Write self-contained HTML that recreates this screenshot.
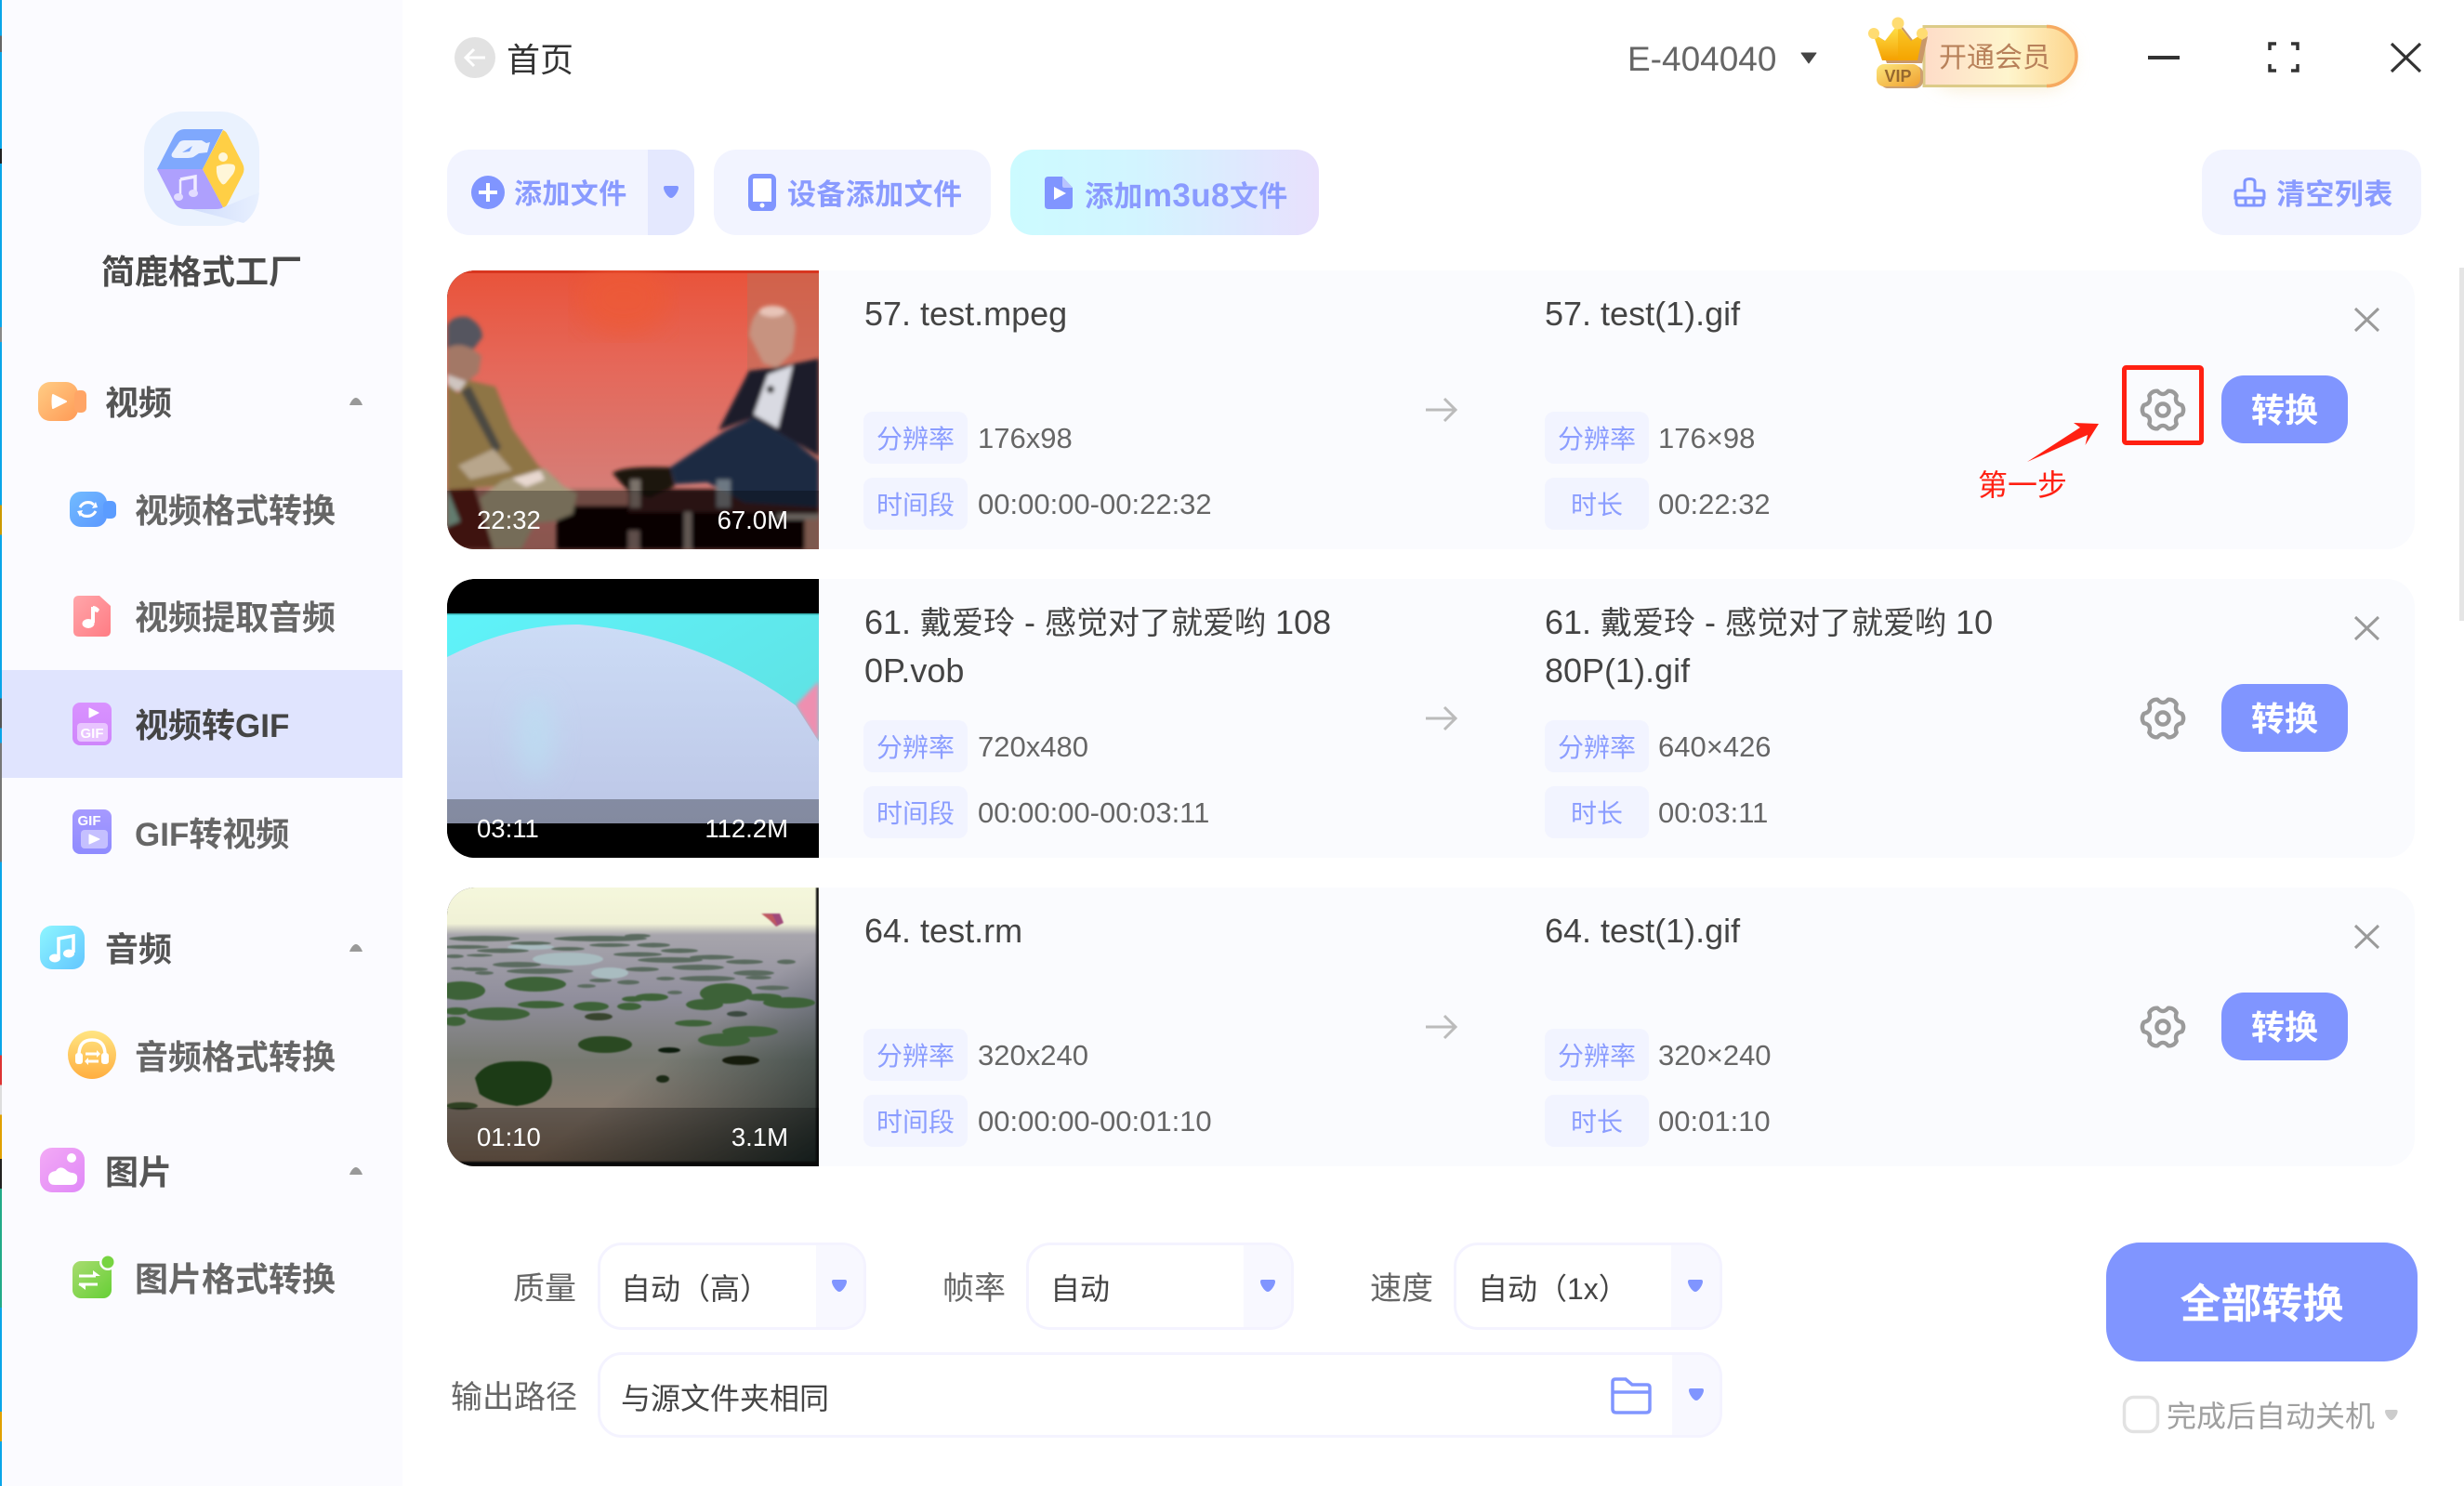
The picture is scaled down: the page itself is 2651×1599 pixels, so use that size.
<!DOCTYPE html>
<html lang="zh"><head><meta charset="utf-8"><title>简鹿格式工厂</title>
<style>
html,body{margin:0;padding:0;background:#fff}
body{position:relative;width:2651px;height:1599px;overflow:hidden;font-family:"Liberation Sans","Noto Sans CJK SC",sans-serif;color:#444}
.t{position:absolute;white-space:nowrap;line-height:1}
.b{font-weight:700}
.abs{position:absolute;left:0;top:0}
.side{position:absolute;left:0;top:0;width:433px;height:1599px;background:#fbfbff}
.strip{position:absolute;left:0;top:0;width:2px;height:1599px;background:linear-gradient(180deg,#0aa5e8 0 2.4%,#666 2.4% 3.5%,#0aa5e8 3.5% 10%,#222 10% 11%,#0aa5e8 11% 22%,#888 22% 23%,#0aa5e8 23% 34%,#c90 34% 36%,#0aa5e8 36% 47%,#555 47% 49%,#0aa5e8 49% 50%,#777 50% 58%,#0aa5e8 58% 71%,#d33 71% 73%,#ddd 73% 75%,#e0a000 75% 78%,#222 78% 80%,#2a8 80% 88%,#0aa5e8 88% 95%,#e0a000 95% 97%,#0aa5e8 97%)}
.sel{position:absolute;left:2px;top:721px;width:431px;height:116px;background:#e0e4fe}
.btn{position:absolute;top:161px;height:92px;border-radius:24px;background:#f2f4ff}
.sb{color:#555;font-size:36px}.si{color:#666;font-size:36px}
.pb{color:#8a9bff;font-size:31px;font-weight:700;letter-spacing:.4px}
.row{position:absolute;left:481px;width:2117px;height:300px;background:#fafbfe;border-radius:30px}
.thumb{position:absolute;left:0;top:0;width:400px;height:300px;border-radius:30px 0 0 30px;overflow:hidden;background:#000}
.thumb svg{display:block}
.ov{position:absolute;left:0;top:237px;width:400px;height:63px;background:rgba(0,0,0,.3)}
.tm{color:#fff;font-size:27.5px;top:255px}
.nm{font-size:36px;color:#444;left:449px}
.nm span{font-size:34px}
.tag{position:absolute;width:112px;height:56px;border-radius:10px;background:#f2f4ff;color:#8b9dff;font-size:28px;line-height:59px;text-align:center}
.val{color:#666;font-size:31px}
.go{position:absolute;left:1909px;top:113px;width:136px;height:73px;border-radius:24px;background:#8095ff;color:#fff;font-weight:700;font-size:36px;line-height:75px;text-align:center}
.sel2{position:absolute;box-sizing:border-box;background:#fff;border:3px solid #f4f3ff;border-radius:26px;overflow:hidden}
.sel2 i{position:absolute;top:0;bottom:0;right:0;background:#f8f8ff;display:block}
.lb{color:#666;font-size:34px}
.v2{color:#444;font-size:32px}
.all{position:absolute;left:2266px;top:1337px;width:335px;height:128px;border-radius:36px;background:#8095ff;color:#fff;font-weight:700;font-size:44px;line-height:134px;text-align:center}
.sc{position:absolute;left:2646px;top:288px;width:5px;height:380px;background:#e5e5e5}
</style></head><body>

<div class="side"></div><div class="strip"></div><div class="sel"></div>

<div class="btn" style="left:481px;width:266px;overflow:hidden"><div style="position:absolute;left:216px;top:0;width:50px;height:92px;background:#e4e8fe"></div></div>
<div class="btn" style="left:768px;width:298px"></div>
<div class="btn" style="left:1087px;width:332px;background:linear-gradient(90deg,#ccfbff 0%,#d2f5ff 40%,#e8e0fd 100%)"></div>
<div class="btn" style="left:2369px;width:236px"></div>

<svg class="abs" width="2651" height="1599" viewBox="0 0 2651 1599" style="z-index:1">
<defs>
<linearGradient id="go" x1="0" y1="0" x2="1" y2="1"><stop offset="0" stop-color="#ffcd85"/><stop offset="1" stop-color="#ff9a56"/></linearGradient>
<linearGradient id="gb" x1="0" y1="0" x2="1" y2="1"><stop offset="0" stop-color="#72bcff"/><stop offset="1" stop-color="#5b97ff"/></linearGradient>
<linearGradient id="gr" x1="0" y1="0" x2="1" y2="1"><stop offset="0" stop-color="#ffa6aa"/><stop offset="1" stop-color="#ff7c84"/></linearGradient>
<linearGradient id="gp" x1="0" y1="0" x2="0" y2="1"><stop offset="0" stop-color="#d992ff"/><stop offset="1" stop-color="#cf86fb"/></linearGradient>
<linearGradient id="gv" x1="0" y1="0" x2="0" y2="1"><stop offset="0" stop-color="#a69aff"/><stop offset="1" stop-color="#8f8bff"/></linearGradient>
<linearGradient id="gc" x1="0" y1="0" x2="1" y2="1"><stop offset="0" stop-color="#8ef6ff"/><stop offset="1" stop-color="#62c6ff"/></linearGradient>
<linearGradient id="gy" x1="0" y1="0" x2="0" y2="1"><stop offset="0" stop-color="#ffe582"/><stop offset="1" stop-color="#ffae40"/></linearGradient>
<linearGradient id="gk" x1="0" y1="0" x2="1" y2="1"><stop offset="0" stop-color="#f3aaf5"/><stop offset="1" stop-color="#e088f8"/></linearGradient>
<linearGradient id="gg" x1="0" y1="0" x2="1" y2="1"><stop offset="0" stop-color="#a9dc70"/><stop offset="1" stop-color="#66cf35"/></linearGradient>
<linearGradient id="gs" x1="0" y1="0" x2="1" y2="0"><stop offset="0" stop-color="#cfdcfc"/><stop offset="1" stop-color="#e8f0fe"/></linearGradient>
<linearGradient id="gv1" x1="0" y1="0" x2="1" y2="0"><stop offset="0" stop-color="#fedcc8"/><stop offset=".55" stop-color="#fef5cd"/><stop offset="1" stop-color="#fdd58c"/></linearGradient>
<linearGradient id="gv2" x1="0" y1="0" x2="0" y2="1"><stop offset="0" stop-color="#ffe650"/><stop offset="1" stop-color="#f5a000"/></linearGradient>
<linearGradient id="gv3" x1="0" y1="0" x2="1" y2="1"><stop offset="0" stop-color="#fce67c"/><stop offset="1" stop-color="#f0a030"/></linearGradient>
<path id="dd" d="M2 0H14A2 2 0 0 1 16 2C16 6 11 13 8 13C5 13 0 6 0 2A2 2 0 0 1 2 0Z"/>
<path id="up" d="M0 8C1 5 4 0 7 0S13 5 14 8Z"/>
<g id="gear" fill="none" stroke="#9a9a9a" stroke-width="5" stroke-linejoin="round"><path d="M-6.600 -23.100Q0 -15.500 6.600 -23.100Q13.500 -23.400 16.700 -17.300Q13.400 -7.750 23.300 -5.800Q27 0 23.300 5.800Q13.400 7.750 16.700 17.300Q13.500 23.400 6.600 23.100Q0 15.500 -6.600 23.100Q-13.500 23.400 -16.700 17.300Q-13.400 7.750 -23.300 5.800Q-27 0 -23.300 -5.800Q-13.400 -7.750 -16.700 -17.300Q-13.500 -23.400 -6.600 -23.100Z"/><circle r="7.500"/></g>
<g id="rowicons"><path d="M1053 150H1085M1073 138L1085 150L1073 162" fill="none" stroke="#bbb" stroke-width="3"/><path d="M2053 41L2078 65M2078 41L2053 65" stroke="#9a9a9a" stroke-width="3"/><use href="#gear" transform="translate(1846 150) scale(.88)"/></g>
<filter id="sh" x="-20%" y="-20%" width="140%" height="160%"><feGaussianBlur stdDeviation="9"/></filter>
</defs>

<!-- logo -->
<rect x="155" y="120" width="124" height="123" rx="42" fill="#eaf2fe"/>
<path d="M240 223L279 207Q277 230 262 240L205 225Z" fill="url(#gs)"/>
<path d="M169 182L187 147Q191 139 199 139H240L218 182Z" fill="#7fa8fd"/>
<path d="M169 182H218L240 223Q238 225 232 225H199Q191 225 187 217Z" fill="#aea0fd"/>
<path d="M240 140Q243 141 245 145L261 176Q264 182 261 188L245 219Q243 223 240 223L218 182Z" fill="#ffcf45"/>
<path d="M185 165L193 153Q195 151 199 151H217L222 154L226 153L223 164L214 165L208 169Q205 170 200 170H190Q183 170 185 165Z" fill="#e9f0fe"/>
<path d="M196 164L207 157L204 163Z" fill="#7fa8fd"/>
<circle cx="240" cy="169" r="5" fill="#fff6d8"/>
<path d="M233 179Q243 175 251 177Q255 179 251 187L243 197Q240 200 238 197Q232 190 233 179Z" fill="#fff6d8"/>
<path d="M194 193L210 190V206" fill="none" stroke="#f0ecff" stroke-width="3.5"/>
<path d="M194 193V211" stroke="#f0ecff" stroke-width="2.5"/>
<ellipse cx="192" cy="212" rx="5" ry="4" fill="#e2dcff"/><ellipse cx="208" cy="208" rx="5" ry="4" fill="#e2dcff"/>

<!-- sidebar icons -->
<rect x="41" y="411" width="43" height="42" rx="13" fill="url(#go)"/><rect x="80" y="420" width="13" height="24" rx="5" fill="#ffa566"/>
<path d="M57 425L71 432L57 439Q56 432 57 425Z" fill="#fff" stroke="#fff" stroke-width="2" stroke-linejoin="round"/>
<path d="M376 436C377 433 380 428 383 428S389 433 390 436Z" fill="#999"/>

<rect x="75" y="529" width="40" height="38" rx="12" fill="url(#gb)"/><rect x="111" y="539" width="14" height="19" rx="5" fill="#5b9cff"/>
<path d="M86 546Q90 539 98 541L101 543M103 550Q99 557 90 555L87 553" fill="none" stroke="#fff" stroke-width="3"/>
<path d="M99 547L105 546L103 540Z M89 549L83 550L86 556Z" fill="#fff"/>

<path d="M85 641H107L119 652V679Q119 685 113 685H85Q79 685 79 679V647Q79 641 85 641Z" fill="url(#gr)"/>
<path d="M100 653V670" stroke="#fff" stroke-width="4"/><path d="M100 652Q104 652 107 656L105 659Q102 658 100 658Z" fill="#fff"/>
<ellipse cx="95" cy="671" rx="6.5" ry="5" fill="#fff"/>

<rect x="78" y="756" width="42" height="46" rx="8" fill="url(#gp)"/>
<path d="M96 762L106 767L96 772Z" fill="#fff" stroke="#fff" stroke-linejoin="round"/>
<rect x="83" y="778" width="33" height="20" rx="4" fill="#e8c4ff"/>
<text x="99" y="794" font-family="Liberation Sans" font-weight="700" font-size="15" fill="#fff" text-anchor="middle">GIF</text>

<rect x="78" y="871" width="42" height="48" rx="8" fill="url(#gv)"/>
<text x="96" y="888" font-family="Liberation Sans" font-weight="700" font-size="15" fill="#fff" text-anchor="middle">GIF</text>
<rect x="87" y="893" width="29" height="20" rx="4" fill="#c5c0ff"/>
<path d="M96 898L107 903L96 908Z" fill="#fff" stroke="#fff" stroke-linejoin="round"/>

<rect x="43" y="996" width="48" height="47" rx="13" fill="url(#gc)"/>
<path d="M63 1030V1010L79 1007V1025" fill="none" stroke="#fff" stroke-width="3.5"/>
<ellipse cx="59" cy="1031" rx="6" ry="4.5" fill="#fff"/><ellipse cx="74" cy="1026" rx="6" ry="4.5" fill="#fff"/>

<ellipse cx="99" cy="1135" rx="26" ry="26" fill="url(#gy)"/>
<path d="M85 1136V1133Q86 1119 99 1119T113 1133V1136" fill="none" stroke="#fff" stroke-width="3.5"/>
<rect x="81" y="1133" width="8" height="12" rx="3" fill="#fff"/><rect x="109" y="1133" width="8" height="12" rx="3" fill="#fff"/>
<path d="M92 1134H105M93 1142H106" stroke="#fff" stroke-width="3"/><path d="M104 1130L108 1134L104 1138ZM95 1138L91 1142L95 1146Z" fill="#fff"/>

<rect x="43" y="1235" width="48" height="48" rx="13" fill="url(#gk)"/>
<circle cx="77" cy="1246" r="5" fill="#fff"/>
<path d="M59 1275Q52 1275 52 1268T60 1260Q64 1254 70 1258Q74 1262 78 1262Q84 1263 83 1269Q83 1275 76 1275Z" fill="#fff"/>

<rect x="78" y="1357" width="42" height="40" rx="9" fill="url(#gg)"/>
<circle cx="116" cy="1358" r="9" fill="#fbfbff"/><circle cx="116" cy="1358" r="6.5" fill="#77d441"/>
<path d="M85 1373H103M85 1382H105" stroke="#fff" stroke-width="3"/><path d="M100 1367L108 1373H100ZM92 1382H84L92 1388Z" fill="#fff"/>

<use href="#up" x="376" y="1016" fill="#999"/><use href="#up" x="376" y="1256" fill="#999"/>

<!-- back -->
<circle cx="511" cy="62" r="22" fill="#e2e2e2"/>
<path d="M522 62H501M510 53L501 62L510 71" fill="none" stroke="#fff" stroke-width="3"/>

<!-- top right -->
<path d="M1938 57H1954L1946 68Z" fill="#444" stroke="#444" stroke-width="1" stroke-linejoin="round"/>
<rect x="2075" y="34" width="155" height="62" rx="31" fill="#f4dfb0" opacity=".55" filter="url(#sh)"/>
<path d="M2070 28.500H2202A32 32 0 0 1 2202 92.500H2070Z" fill="url(#gv1)" stroke="#dccb88" stroke-width="3"/>
<path d="M2202 28.500A32 32 0 0 1 2202 92.500" fill="none" stroke="#f6aa60" stroke-width="3.500"/>
<path d="M2015 36L2028 44L2042 26L2056 44L2069 36L2063 65H2025Z" fill="#c99868" transform="translate(5 3)"/>
<path d="M2015 36L2028 44L2042 26L2056 44L2069 36L2063 65H2025Z" fill="url(#gv2)"/>
<path d="M2042 28L2056 44L2069 36L2063 65H2042Z" fill="#f5a800" opacity=".45"/>
<circle cx="2016" cy="36" r="6" fill="#ffdc72"/><circle cx="2042" cy="25" r="6.500" fill="#ffdc72"/><circle cx="2068" cy="36" r="6" fill="#ffdc72"/>
<rect x="2023" y="71" width="46" height="24" rx="8" fill="#cda070"/>
<rect x="2019" y="69" width="47" height="24" rx="8" fill="url(#gv3)"/>
<text x="2042" y="88" font-family="Liberation Sans" font-weight="700" font-size="18" fill="#96682f" text-anchor="middle">VIP</text>
<rect x="2311" y="60" width="34" height="4" fill="#333"/>
<path d="M2442 54V47H2449M2465 47H2472V54M2472 69V76H2465M2449 76H2442V69" fill="none" stroke="#333" stroke-width="3.500"/>
<path d="M2573 47L2604 77M2604 47L2573 77" stroke="#333" stroke-width="3.200"/>

<!-- toolbar icons -->
<circle cx="525" cy="207" r="18" fill="#8095ff"/><path d="M525 197V217M515 207H535" stroke="#fff" stroke-width="4"/>
<use href="#dd" x="714" y="200" fill="#8095ff"/>
<rect x="807.500" y="189.500" width="25" height="35" rx="4" fill="#fff" stroke="#8095ff" stroke-width="5"/><path d="M806 217H834V222Q834 227 829 227H811Q806 227 806 222Z" fill="#8095ff"/><circle cx="820" cy="221" r="2.500" fill="#fff"/>
<path d="M1128 190H1143L1154 202V221Q1154 225 1150 225H1128Q1124 225 1124 221V194Q1124 190 1128 190Z" fill="#8095ff"/><path d="M1143 190L1154 202H1145Q1143 202 1143 200Z" fill="#b9c4ff"/><path d="M1134 201L1147 208L1134 215Z" fill="#fff"/>
<path d="M2415 205V196Q2415 192.500 2420.500 192.500T2426 196V205H2434Q2436 205 2436 208V213H2405V208Q2405 205 2407 205Z M2406 213V218Q2406 221 2409 221H2432Q2435 221 2435 218V213 M2416 213V221M2425 213V221" fill="#f2f4ff" stroke="#8095ff" stroke-width="3"/>
</svg>

<!-- sidebar text -->
<div class="t b" style="left:109px;top:275px;font-size:36px;color:#4a4a4a">简鹿格式工厂</div>
<div class="t b sb" style="left:113px;top:416px">视频</div>
<div class="t b si" style="left:145px;top:532px">视频格式转换</div>
<div class="t b si" style="left:145px;top:647px">视频提取音频</div>
<div class="t b" style="left:145px;top:763px;font-size:36px;color:#444">视频转<span style="font-size:35px">GIF</span></div>
<div class="t b si" style="left:145px;top:880px"><span style="font-size:35px">GIF</span>转视频</div>
<div class="t b sb" style="left:113px;top:1004px">音频</div>
<div class="t b si" style="left:145px;top:1120px">音频格式转换</div>
<div class="t b sb" style="left:113px;top:1244px">图片</div>
<div class="t b si" style="left:145px;top:1359px">图片格式转换</div>

<!-- header text -->
<div class="t" style="left:545px;top:47px;font-size:36px;color:#333">首页</div>
<div class="t" style="left:1751px;top:45px;font-size:37px;color:#666">E-404040</div>
<div class="t" style="left:2086px;top:48px;font-size:30px;color:#b8815a;z-index:2">开通会员</div>

<div class="t pb" style="left:553px;top:195px;font-size:30px">添加文件</div>
<div class="t pb" style="left:847px;top:194px">设备添加文件</div>
<div class="t pb" style="left:1167px;top:193px">添加<span style="font-size:35px">m3u8</span>文件</div>
<div class="t pb" style="left:2449px;top:194px">清空列表</div>

<!-- row 1 -->
<div class="row" style="top:291px">
 <div class="thumb">
 <svg width="400" height="300" viewBox="0 0 400 300">
  <defs><linearGradient id="r1" x1="0" y1="0" x2="0" y2="1"><stop offset="0" stop-color="#e9533a"/><stop offset=".35" stop-color="#e5685a"/><stop offset=".8" stop-color="#d57e78"/><stop offset="1" stop-color="#c47a70"/></linearGradient>
  <filter id="b1"><feGaussianBlur stdDeviation="2"/></filter><filter id="b1b"><feGaussianBlur stdDeviation="14"/></filter></defs>
  <rect width="400" height="300" fill="url(#r1)"/>
  <rect x="323" width="77" height="240" fill="#b9705a" opacity=".5"/>
  <rect width="400" height="3" fill="#d8361f"/>
  <ellipse cx="190" cy="30" rx="50" ry="40" fill="#ee5a36" opacity=".7" filter="url(#b1b)"/>
  <g filter="url(#b1)">
  <rect x="0" y="235" width="400" height="22" fill="#a06a60"/>
  <rect x="118" y="253" width="282" height="47" fill="#0a0405"/>
  <rect x="195" y="235" width="205" height="25" fill="#3a1c1c"/>
  <rect x="255" y="260" width="8" height="40" fill="#8d7f78"/><rect x="355" y="262" width="45" height="6" fill="#9a9088"/><rect x="385" y="268" width="15" height="32" fill="#b28070"/>
  <rect x="195" y="280" width="12" height="20" fill="#88706a"/>
  <path d="M0 225L30 235L50 300H0Z" fill="#5a1a18"/>
  <path d="M0 235L14 270L2 275H0Z" fill="#8fb3a0"/>
  <path d="M0 60Q5 48 22 50Q38 58 38 72L28 85Q12 76 0 90Z" fill="#55555f"/>
  <path d="M0 84Q12 76 28 85L37 92L34 110L22 120L0 116Z" fill="#a37866"/>
  <path d="M0 112L22 120L15 130L0 128Z" fill="#cfc5c0"/>
  <path d="M0 122L12 132L22 118L52 125L70 170L98 210L120 226L80 222L60 232L0 236Z" fill="#8e7445"/>
  <path d="M15 130L25 124L58 190L52 198Z" fill="#4b4a42"/>
  <path d="M12 210L50 192L70 215L25 225Z" fill="#b8a68c"/>
  <path d="M60 226L105 213L125 232L140 240L135 262L115 270L95 272L80 300H50L35 245Z" fill="#a89b7e"/>
  <path d="M70 224L100 215L105 225L85 233Z" fill="#e8d8d0"/>
  <path d="M178 218Q190 210 240 212L245 232L218 245L195 238Z" fill="#1c1411"/>
  <path d="M240 212L300 172L330 158L375 185L400 205V255L320 250L280 228L245 230Z" fill="#1e2a42"/>
  <path d="M325 108L350 105L400 95V200L375 185L330 158L292 172Z" fill="#1e1e2c"/>
  <path d="M345 112L372 102L356 170L330 155Z" fill="#d9dae2"/>
  <circle cx="348" cy="128" r="4" fill="#222"/>
  <path d="M325 70Q328 38 350 38Q372 38 375 62L372 88L355 105L340 100Z" fill="#c79380"/>
  <ellipse cx="350" cy="44" rx="14" ry="6" fill="#e8c4b8"/>
  <path d="M290 225H305V255H290Z" fill="#8f9aa0" opacity=".7"/><path d="M197 225H208V255H197Z" fill="#a59a90" opacity=".7"/>
  </g>
 </svg>
 <div class="ov"></div>
 </div>
 <div class="t tm" style="left:32px">22:32</div><div class="t tm" style="right:1750px">67.0M</div>
 <div class="t nm" style="top:29px">57. test.mpeg</div>
 <div class="tag" style="left:448px;top:152px">分辨率</div><div class="t val" style="left:571px;top:165px">176x98</div>
 <div class="tag" style="left:448px;top:223px">时间段</div><div class="t val" style="left:571px;top:236px">00:00:00-00:22:32</div>
 <div class="t nm" style="left:1181px;top:29px">57. test(1).gif</div>
 <div class="tag" style="left:1181px;top:152px">分辨率</div><div class="t val" style="left:1303px;top:165px">176×98</div>
 <div class="tag" style="left:1181px;top:223px">时长</div><div class="t val" style="left:1303px;top:236px">00:22:32</div>
 <svg class="abs" width="2117" height="300" viewBox="0 0 2117 300"><use href="#rowicons"/></svg>
 <div class="go">转换</div>
</div>

<!-- row 2 -->
<div class="row" style="top:623px">
 <div class="thumb">
 <svg width="400" height="300" viewBox="0 0 400 300">
  <defs><linearGradient id="r2c" x1="0" y1="0" x2="1" y2="1"><stop offset="0" stop-color="#5ff3fa"/><stop offset="1" stop-color="#5fdcdc"/></linearGradient><linearGradient id="r2d" x1="0" y1="0" x2="0" y2="1"><stop offset="0" stop-color="#ccdcf6"/><stop offset="1" stop-color="#bcc6e6"/></linearGradient><filter id="b2"><feGaussianBlur stdDeviation="2"/></filter><filter id="b2b" x="-100%" y="-100%" width="300%" height="300%"><feGaussianBlur stdDeviation="14"/></filter></defs>
  <rect width="400" height="300" fill="#000"/>
  <rect y="37" width="400" height="226" fill="url(#r2c)"/>
  <g filter="url(#b2)">
  <path d="M400 110L375 136L400 178Z" fill="#ee8fb0"/>
  </g>
  <path d="M0 84Q70 48 142 49Q270 60 375 136L400 175V263H0Z" fill="url(#r2d)"/>
  <ellipse cx="95" cy="170" rx="20" ry="46" fill="#b9e4f4" opacity=".55" filter="url(#b2b)"/>
  <rect y="37" width="400" height="1.500" fill="#3aa"/>
 </svg>
 <div class="ov"></div>
 </div>
 <div class="t tm" style="left:32px">03:11</div><div class="t tm" style="right:1750px">112.2M</div>
 <div class="t nm" style="top:29px">61. <span>戴爱玲</span> - <span>感觉对了就爱哟</span> 108</div>
 <div class="t nm" style="top:81px">0P.vob</div>
 <div class="tag" style="left:448px;top:152px">分辨率</div><div class="t val" style="left:571px;top:165px">720x480</div>
 <div class="tag" style="left:448px;top:223px">时间段</div><div class="t val" style="left:571px;top:236px">00:00:00-00:03:11</div>
 <div class="t nm" style="left:1181px;top:29px">61. <span>戴爱玲</span> - <span>感觉对了就爱哟</span> 10</div>
 <div class="t nm" style="left:1181px;top:81px">80P(1).gif</div>
 <div class="tag" style="left:1181px;top:152px">分辨率</div><div class="t val" style="left:1303px;top:165px">640×426</div>
 <div class="tag" style="left:1181px;top:223px">时长</div><div class="t val" style="left:1303px;top:236px">00:03:11</div>
 <svg class="abs" width="2117" height="300" viewBox="0 0 2117 300"><use href="#rowicons"/></svg>
 <div class="go">转换</div>
</div>

<!-- row 3 -->
<div class="row" style="top:955px">
 <div class="thumb">
 <svg width="400" height="300" viewBox="0 0 400 300">
  <defs><linearGradient id="r3w" x1="0" y1="0" x2="0" y2="1"><stop offset="0" stop-color="#f5f7dc"/><stop offset=".13" stop-color="#f0f1d6"/><stop offset=".17" stop-color="#a7a5ac"/><stop offset=".4" stop-color="#908e9c"/><stop offset=".62" stop-color="#787a72"/><stop offset=".8" stop-color="#8a7c70"/><stop offset="1" stop-color="#77614f"/></linearGradient>
  <linearGradient id="r3d" x1="0" y1="0" x2="1" y2="1"><stop offset=".6" stop-color="#1c2e30" stop-opacity="0"/><stop offset="1" stop-color="#0f2020" stop-opacity=".9"/></linearGradient><filter id="b3"><feGaussianBlur stdDeviation=".7"/></filter></defs>
  <rect width="400" height="300" fill="url(#r3w)"/>
  <rect width="400" height="300" fill="url(#r3d)"/>
  <g filter="url(#b3)">
  <g fill="#a9bcc0"><ellipse cx="130" cy="77" rx="38" ry="7"/><ellipse cx="175" cy="92" rx="20" ry="6"/><ellipse cx="90" cy="64" rx="25" ry="3"/></g>
  <g fill="#5a6a5e">
  <ellipse cx="40" cy="55" rx="38" ry="3"/><ellipse cx="90" cy="60" rx="22" ry="2"/><ellipse cx="165" cy="55" rx="50" ry="3"/><ellipse cx="205" cy="52" rx="14" ry="2"/><ellipse cx="20" cy="64" rx="25" ry="2"/>
  <ellipse cx="60" cy="68" rx="28" ry="2.500"/><ellipse cx="130" cy="66" rx="18" ry="2"/><ellipse cx="175" cy="62" rx="22" ry="2"/><ellipse cx="222" cy="62" rx="18" ry="2.500"/><ellipse cx="250" cy="68" rx="20" ry="2.500"/><ellipse cx="205" cy="72" rx="26" ry="2.500"/>
  <ellipse cx="240" cy="78" rx="35" ry="3"/><ellipse cx="285" cy="75" rx="24" ry="2.500"/><ellipse cx="320" cy="80" rx="20" ry="2.500"/><ellipse cx="270" cy="86" rx="28" ry="3"/><ellipse cx="330" cy="92" rx="22" ry="3"/>
  <ellipse cx="210" cy="88" rx="18" ry="2.500"/><ellipse cx="75" cy="83" rx="26" ry="3"/><ellipse cx="30" cy="88" rx="14" ry="2"/><ellipse cx="8" cy="74" rx="10" ry="2"/><ellipse cx="100" cy="90" rx="36" ry="3"/><ellipse cx="35" cy="73" rx="14" ry="1.500"/>
  <ellipse cx="280" cy="98" rx="30" ry="3"/><ellipse cx="350" cy="108" rx="18" ry="2.500"/><ellipse cx="335" cy="97" rx="14" ry="2"/><ellipse cx="195" cy="102" rx="12" ry="2.500"/><ellipse cx="235" cy="98" rx="10" ry="2"/><ellipse cx="365" cy="80" rx="10" ry="2.500"/><ellipse cx="150" cy="106" rx="10" ry="2"/><ellipse cx="165" cy="100" rx="12" ry="2"/>
  <ellipse cx="245" cy="113" rx="8" ry="2"/><ellipse cx="12" cy="87" rx="8" ry="1.500"/><ellipse cx="40" cy="92" rx="10" ry="2"/>
  </g>
  <g fill="#3c6238">
  <ellipse cx="15" cy="111" rx="26" ry="10"/><ellipse cx="95" cy="104" rx="33" ry="8"/><ellipse cx="55" cy="136" rx="34" ry="7"/><ellipse cx="101" cy="126" rx="25" ry="4"/><ellipse cx="155" cy="128" rx="19" ry="5"/><ellipse cx="196" cy="128" rx="13" ry="4"/><ellipse cx="277" cy="126" rx="20" ry="6"/><ellipse cx="300" cy="114" rx="28" ry="11"/><ellipse cx="340" cy="118" rx="20" ry="4"/><ellipse cx="368" cy="124" rx="28" ry="6"/><ellipse cx="265" cy="146" rx="20" ry="3.500"/><ellipse cx="298" cy="164" rx="28" ry="7"/><ellipse cx="326" cy="155" rx="30" ry="6"/><ellipse cx="10" cy="133" rx="13" ry="4"/><ellipse cx="8" cy="144" rx="12" ry="5"/><ellipse cx="220" cy="118" rx="18" ry="4"/><ellipse cx="200" cy="120" rx="12" ry="3"/>
  </g>
  <ellipse cx="170" cy="169" rx="29" ry="9" fill="#2a4a22"/><ellipse cx="163" cy="139" rx="15" ry="4" fill="#39442e"/><ellipse cx="312" cy="136" rx="11" ry="3" fill="#3a4a40"/>
  <ellipse cx="239" cy="175" rx="12" ry="3" fill="#101a10"/><ellipse cx="316" cy="186" rx="20" ry="5" fill="#121c10"/><ellipse cx="232" cy="206" rx="7" ry="4" fill="#1c2a14"/>
  <path d="M30 205Q40 186 75 187Q110 186 112 200Q115 212 108 220Q100 232 75 235Q48 232 35 222Z" fill="#1c3a12"/>
  <ellipse cx="16" cy="235" rx="17" ry="4" fill="#2f4020"/>
  <path d="M340 28L358 28L362 38L354 42Z" fill="#a04a7a"/><path d="M338 28L350 29L356 42Z" fill="#c0585e"/>
  <rect x="397" width="3" height="300" fill="#111"/><rect y="295" width="400" height="5" fill="#111"/>
  </g>
 </svg>
 <div class="ov"></div>
 </div>
 <div class="t tm" style="left:32px">01:10</div><div class="t tm" style="right:1750px">3.1M</div>
 <div class="t nm" style="top:29px">64. test.rm</div>
 <div class="tag" style="left:448px;top:152px">分辨率</div><div class="t val" style="left:571px;top:165px">320x240</div>
 <div class="tag" style="left:448px;top:223px">时间段</div><div class="t val" style="left:571px;top:236px">00:00:00-00:01:10</div>
 <div class="t nm" style="left:1181px;top:29px">64. test(1).gif</div>
 <div class="tag" style="left:1181px;top:152px">分辨率</div><div class="t val" style="left:1303px;top:165px">320×240</div>
 <div class="tag" style="left:1181px;top:223px">时长</div><div class="t val" style="left:1303px;top:236px">00:01:10</div>
 <svg class="abs" width="2117" height="300" viewBox="0 0 2117 300"><use href="#rowicons"/></svg>
 <div class="go">转换</div>
</div>

<!-- annotation -->
<svg class="abs" width="2651" height="1599" viewBox="0 0 2651 1599" style="z-index:3">
 <rect x="2285.500" y="395.500" width="83" height="81" rx="2" fill="none" stroke="#ff2012" stroke-width="5"/>
 <path d="M2258 456L2231 455L2238 460L2181 497L2246 468L2243.500 479Z" fill="#ff2012"/>
</svg>
<div class="t" style="left:2128px;top:506px;font-size:32px;color:#ff2012;z-index:3">第一步</div>

<!-- bottom controls -->
<div class="t lb" style="left:552px;top:1370px">质量</div>
<div class="sel2" style="left:643px;top:1337px;width:289px;height:94px"><i style="width:51px"></i></div>
<div class="t v2" style="left:668px;top:1371px">自动（高）</div>
<div class="t lb" style="left:1014px;top:1370px">帧率</div>
<div class="sel2" style="left:1104px;top:1337px;width:288px;height:94px"><i style="width:51px"></i></div>
<div class="t v2" style="left:1130px;top:1371px">自动</div>
<div class="t lb" style="left:1474px;top:1370px">速度</div>
<div class="sel2" style="left:1564px;top:1337px;width:289px;height:94px"><i style="width:52px"></i></div>
<div class="t v2" style="left:1590px;top:1371px">自动（1x）</div>
<div class="t lb" style="left:485px;top:1487px">输出路径</div>
<div class="sel2" style="left:643px;top:1455px;height:92px;width:1210px"><i style="width:51px"></i></div>
<div class="t v2" style="left:668px;top:1489px">与源文件夹相同</div>
<svg class="abs" width="2651" height="1599" viewBox="0 0 2651 1599" style="z-index:2">
 <use href="#dd" x="895" y="1377" fill="#8095ff"/><use href="#dd" x="1356" y="1377" fill="#8095ff"/><use href="#dd" x="1816" y="1377" fill="#8095ff"/><use href="#dd" x="1817" y="1494" fill="#8095ff"/>
 <path d="M1735 1498V1487Q1735 1484 1738 1484H1749L1756 1490H1772Q1775 1490 1775 1493V1516Q1775 1520 1771 1520H1739Q1735 1520 1735 1516V1498H1775" fill="none" stroke="#8095ff" stroke-width="3.500"/>
 <rect x="2285.500" y="1503.500" width="36" height="37" rx="10" fill="#fff" stroke="#e2e2e2" stroke-width="3.500"/>
 <use href="#dd" x="0" y="0" transform="translate(2566 1517) scale(.85)" fill="#ccc"/>
</svg>
<div class="all">全部转换</div>
<div class="t" style="left:2331px;top:1508px;font-size:32px;color:#a0a0a0">完成后自动关机</div>
<div class="sc"></div>
</body></html>
